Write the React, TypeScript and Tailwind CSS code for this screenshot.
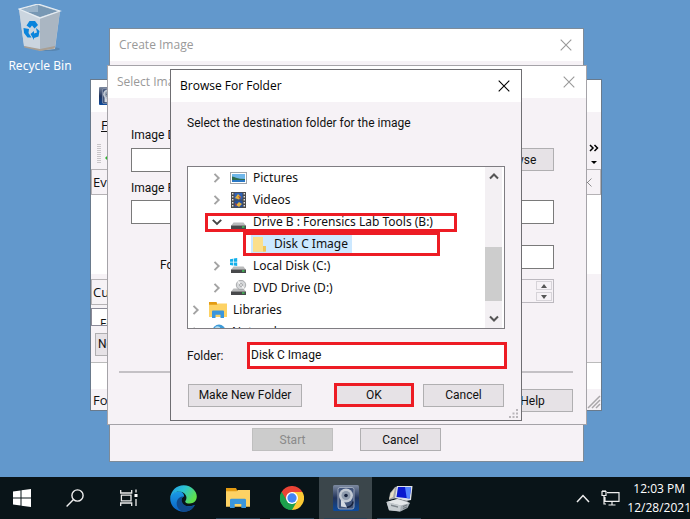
import React from 'react';

const SEGOE = "font-['Open_Sans',sans-serif]";
const SHELL = "font-['Noto_Sans',sans-serif]";
const TAHOMA = "font-['Roboto','Noto_Sans',sans-serif]";

function Cross({ className = '' }: { className?: string }) {
  return (
    <svg viewBox="0 0 12 12" className={'h-3 w-3 ' + className} fill="none" stroke="currentColor" strokeWidth="1.1">
      <path d="M.7.7l10.6 10.6M11.3.7L.7 11.3" />
    </svg>
  );
}

function TitleBar({ title, active = false }: { title: string; active?: boolean }) {
  return (
    <header className={'flex h-8 shrink-0 items-center justify-between bg-white pl-[9px] pr-[11px] ' + (active ? 'text-black' : 'text-[#999]')}>
      <h2 className={'whitespace-nowrap text-[12px] leading-4 ' + SEGOE}>{title}</h2>
      <button type="button" aria-label={'Close ' + title}>
        <Cross />
      </button>
    </header>
  );
}

function PushButton({ children, className = '', disabled = false }: { children: React.ReactNode; className?: string; disabled?: boolean }) {
  return (
    <button
      type="button"
      disabled={disabled}
      className={
        'h-[23px] shrink-0 whitespace-nowrap border text-[12px] leading-4 ' +
        (disabled ? 'border-[#bfbfbf] bg-[#ccc] text-[#8a8a8a] ' : 'border-[#b0afb1] bg-[#e6e2e6] text-[#111] ') +
        TAHOMA + ' ' + className
      }
    >
      {children}
    </button>
  );
}

function DiskImager({ className = '' }: { className?: string }) {
  return (
    <svg viewBox="0 0 26 26" className={className}>
      <defs>
        <linearGradient id="imgr" x1="0" y1="0" x2="0" y2="1">
          <stop offset="0" stopColor="#7d8aa0" />
          <stop offset=".5" stopColor="#22345c" />
          <stop offset="1" stopColor="#0c4a9c" />
        </linearGradient>
      </defs>
      <rect width="26" height="26" rx="1.5" fill="url(#imgr)" />
      <rect x="5" y="2.5" width="16" height="21.5" rx="2" fill="#41547a" stroke="#aeb8c8" strokeWidth=".8" />
      <circle cx="13" cy="10.5" r="7" fill="#c3cad4" />
      <circle cx="13" cy="10.5" r="4.5" fill="#8f9cae" />
      <circle cx="13" cy="10.5" r="1.8" fill="#17233f" />
      <path d="M8 15v6.500l6 1-3-6z" fill="#d5dae2" />
      <path d="M14 22.500c4-1 6-3 6-6" fill="none" stroke="#17233f" strokeWidth="1.500" />
    </svg>
  );
}

function RecycleBin() {
  return (
    <svg viewBox="0 0 44 48" className="h-12 w-11">
      <ellipse cx="30" cy="45" rx="12" ry="2" fill="#4d7396" opacity=".5" />
      <path d="M1 5L20 0l22 7-5 38-15 1.500L6 42z" fill="#c3cdd7" />
      <path d="M1 5l21 9v32.500L6 42z" fill="#cbd5df" />
      <path d="M22 14l20-7-5 36-15 3.500z" fill="#aab6c2" />
      <path d="M3 5.500L20 1l20 6.300L22 13z" fill="#7898b4" />
      <path d="M3 5.500L20 1v7l-12 0z" fill="#9bb4ca" />
      <path d="M1 5L20 0l22 7-20 7z" fill="none" stroke="#e6edf3" strokeWidth="1.200" />
      <path d="M6 42l16 3 15-3-.4 2.500L22 47 6.300 43.500z" fill="#a99f93" />
      <g fill="#0a84dc">
        <path d="M8.500 21.500l3-4.500h5.500l3 4-3.500 3.500-2.500-3-2 2.500z" />
        <path d="M5.500 24l5.500 1-.5 4 3 4.500h-4l-3.500-4.500z" />
        <path d="M12.500 30l3.500-3v2.500l3-1-1-4.500 3.500 3-1 5.500-4.500 1.500v2z" />
      </g>
    </svg>
  );
}

/* ---------- imager main window ---------- */

function MainWindow() {
  return (
    <section className={'absolute left-[90px] top-[79px] flex h-[332px] w-[512px] flex-col border border-[#697a8c] bg-[#f6f2f6] text-[13px] leading-4 text-[#111] ' + SEGOE}>
      <header className="flex h-8 shrink-0 items-center bg-white pl-2">
        <DiskImager className="h-[18px] w-[18px]" />
      </header>
      <nav className="flex h-[26px] shrink-0 items-center pl-[10px]">
        <button type="button"><u>F</u>ile</button>
      </nav>
      <div className="flex h-[31px] shrink-0 items-center justify-between pl-[6px] pr-[2px]">
        <div className="flex items-center gap-1">
          <span className="h-5 w-1 bg-[repeating-linear-gradient(#c8c5c8_0_1px,transparent_1px_2px)]" />
          <svg viewBox="0 0 8 8" className="mt-2 h-2 w-2"><path d="M4 0l4 4-4 4-4-4z" fill="#2fb52f" /></svg>
        </div>
        <svg viewBox="0 0 10 24" className="h-6 w-[10px]" fill="none" stroke="#000" strokeWidth="1.500">
          <path d="M1 3l3 3-3 3M5.500 3l3 3-3 3" />
          <path d="M2 19h6l-3 3z" fill="#000" stroke="none" />
        </svg>
      </div>
      <div className="flex h-[26px] shrink-0 items-center justify-between border border-[#b5b2b5] pl-[1px] pr-2">
        <span>Evidence Tree</span>
        <button type="button" aria-label="Close Evidence Tree"><Cross className="h-[9px] w-[9px] text-[#777]" /></button>
      </div>
      <div className="h-[79px] shrink-0 bg-white" />
      <div className="mr-4 mt-[5px] flex h-[26px] shrink-0 items-center border border-[#b5b2b5] pl-[1px]">Custom</div>
      <div className="mr-4 mt-[3px] h-[18px] shrink-0 overflow-hidden border border-[#8b8a98] bg-white pl-2 pt-[7px] text-[12px]">File</div>
      <div className="flex h-[37px] shrink-0 items-center border-b border-[#bbb] pl-1">
        <PushButton className="w-[60px] pl-[2px] text-left">New</PushButton>
      </div>
      <div className="flex-1 bg-white" />
      <footer className="flex h-[21px] shrink-0 items-center justify-between pl-[2px]">
        <span>For</span>
        <svg viewBox="0 0 14 14" className="mt-1 h-[14px] w-[14px]" stroke="#aaa7aa" strokeWidth="1.500">
          <path d="M1 13L13 1M5 13l8-8M9 13l4-4" />
        </svg>
      </footer>
    </section>
  );
}

/* ---------- create image window ---------- */

function CreateImageWindow() {
  return (
    <section className="absolute left-[109px] top-[28px] flex h-[434px] w-[475px] flex-col border border-[#7d8b99] bg-[#f6f2f6]">
      <TitleBar title="Create Image" />
      <div className="flex-1" />
      <div className="mb-[10px] flex gap-[27px] pl-[142px]">
        <PushButton disabled className="w-[81px]">Start</PushButton>
        <PushButton className="w-[81px]">Cancel</PushButton>
      </div>
    </section>
  );
}

/* ---------- select image destination window ---------- */

const FIELD = 'block h-6 border border-[#7a7a7a] bg-white px-1 outline-none ';

function SelectImageWindow() {
  return (
    <section className={'absolute left-[107px] top-[65px] flex h-[360px] w-[480px] flex-col border border-[#a5a3a8] bg-[#f6f2f6] text-[12px] leading-4 text-[#111] ' + TAHOMA}>
      <TitleBar title="Select Image Destination" />
      <div className="flex flex-1 flex-col pl-[23px] pr-8 pt-[29px]">
        <label htmlFor="dest">Image Destination Folder</label>
        <div className="mt-[5px] flex gap-2">
          <input id="dest" className={FIELD + 'min-w-0 flex-1'} />
          <PushButton className="w-[75px]">Browse</PushButton>
        </div>
        <label htmlFor="fname" className="mt-2">Image Filename</label>
        <input id="fname" className={FIELD + 'mt-1 w-full'} />
        <input id="fragment" aria-label="Fragment size" className={FIELD + 'mt-[21px] w-20 self-end'} />
        <div className="mt-[-12px] flex items-start justify-between pl-[29px]">
          <label htmlFor="level">For</label>
          <div className="mt-[22px] flex h-6 w-20 border border-[#bcb9bf]">
            <input id="level" className="min-w-0 flex-1 outline-none" />
            <span className="flex w-[18px] flex-col gap-[2px] p-px">
              <button type="button" aria-label="Increase" className="flex flex-1 items-center justify-center border border-[#d6d3d8]">
                <svg viewBox="0 0 6 4" className="h-1 w-[6px]"><path d="M0 4l3-4 3 4z" fill="#555" /></svg>
              </button>
              <button type="button" aria-label="Decrease" className="flex flex-1 items-center justify-center border border-[#d6d3d8]">
                <svg viewBox="0 0 6 4" className="h-1 w-[6px]"><path d="M0 0l3 4 3-4z" fill="#555" /></svg>
              </button>
            </span>
          </div>
        </div>
      </div>
      <footer className="flex flex-col gap-4 pb-3 pl-[11px] pr-[13px]">
        <hr className="border-t-2 border-[#c4c1c5]" />
        <PushButton className="w-[81px] self-end">Help</PushButton>
      </footer>
    </section>
  );
}

/* ---------- tree icons ---------- */

function PictureIcon() {
  return (
    <svg viewBox="0 0 17 16" className="h-4 w-[17px]">
      <rect x=".5" y="2.500" width="16" height="11" fill="#fff" stroke="#a0a5aa" />
      <rect x="2" y="4" width="13" height="8" fill="#6fb7ea" />
      <path d="M2 6.500c3 .3 5 2 8 2.200l5 .3v1H2z" fill="#2e6b4c" />
      <path d="M2 10h13v2H2z" fill="#2a78c4" />
    </svg>
  );
}
function VideoIcon() {
  return (
    <svg viewBox="0 0 17 16" className="h-4 w-[17px]">
      <rect x="1" width="15" height="16" fill="#4b4b4b" />
      <path d="M2.700 1v15M14.300 1v15" stroke="#e2e2e2" strokeWidth="1.400" strokeDasharray="1.500 1.500" />
      <rect x="4.500" y=".8" width="8" height="6.700" fill="#2f62b8" />
      <rect x="4.500" y="8.500" width="8" height="6.700" fill="#234f9f" />
      <path d="M5 6l3-4 3 3-2 2.500zM6 13l3-3 3 2-3 3z" fill="#e3b23c" />
      <path d="M8 4l3 1-1 2zM5 11l2 1-1 3z" fill="#b8452f" />
    </svg>
  );
}
function DriveBody() {
  return (
    <>
      <path d="M3.500 8.500h10l2.500 3.300H1z" fill="#b9babb" />
      <path d="M1 11.500h15V15H1z" fill="#48494b" />
      <path d="M12 13h2.500" stroke="#3fe05a" strokeWidth="1.200" />
    </>
  );
}
function DriveIcon() {
  return <svg viewBox="0 0 17 16" className="h-4 w-[17px]"><DriveBody /></svg>;
}
function SystemDriveIcon() {
  return (
    <svg viewBox="0 0 17 16" className="h-4 w-[17px]">
      <DriveBody />
      <path d="M0 1.200l3-.5v3H0zM3.700.6L7.200 0v3.700H3.700zM0 4.400h3v3l-3-.5zM3.700 4.400h3.500V8l-3.500-.5z" fill="#14b0ea" />
    </svg>
  );
}
function DvdIcon() {
  return (
    <svg viewBox="0 0 17 16" className="h-4 w-[17px]">
      <DriveBody />
      <circle cx="11" cy="5" r="4.700" fill="#d6d8da" stroke="#9a9da0" strokeWidth=".8" />
      <path d="M11 5L8 1.500M11 5l3 3.500" stroke="#f5f5f5" strokeWidth="1.500" />
      <circle cx="11" cy="5" r="1.400" fill="#fff" stroke="#8b8e91" strokeWidth=".8" />
    </svg>
  );
}
function FolderIcon() {
  return (
    <svg viewBox="0 0 17 16" className="h-4 w-[17px]">
      <path d="M2 1h9v13l4 1.500H2z" fill="#f4d06a" />
      <path d="M2 1h10v9h3v5.500H2z" fill="#fbdf8b" />
      <path d="M12 10h3v5.500h-3z" fill="#eec65a" />
    </svg>
  );
}
function LibraryIcon({ className = 'h-4 w-[18px]' }: { className?: string }) {
  return (
    <svg viewBox="0 0 18 15" className={className} preserveAspectRatio="none">
      <path d="M0 0h7.500l1 2H18v4H0z" fill="#e39b12" />
      <path d="M0 2.500h8l1-1h9V14H0z" fill="#fdd264" />
      <path d="M3 15V9q0-1 1-1h10q1 0 1 1v6h-3.500v-3h-5v3z" fill="#3a96dc" />
    </svg>
  );
}
function NetworkIcon() {
  return (
    <svg viewBox="0 0 17 16" className="h-4 w-[17px]">
      <circle cx="10" cy="7" r="6.500" fill="#3c9ad8" />
      <path d="M6 3c3-2 6 0 5 2s-4 1-5-2z" fill="#b7dff2" />
      <path d="M1 8h9v6H1z" fill="#2d78b5" />
    </svg>
  );
}

function Expander({ open = false }: { open?: boolean }) {
  return (
    <svg viewBox="0 0 10 10" className="h-[10px] w-[10px]" fill="none" stroke={open ? '#444' : '#a3a3a3'} strokeWidth="1.900">
      {open ? <path d="M.8 2.800L5 7l4.200-4.200" /> : <path d="M2.500 .8L6.700 5 2.500 9.200" />}
    </svg>
  );
}

type Row = { label: string; icon: React.ReactNode; indent: string; open?: boolean; leaf?: boolean; mark?: string };

const rows: Row[] = [
  { label: 'Pictures', icon: <PictureIcon />, indent: 'pl-6' },
  { label: 'Videos', icon: <VideoIcon />, indent: 'pl-6' },
  { label: 'Drive B : Forensics Lab Tools (B:)', icon: <DriveIcon />, indent: 'pl-6', open: true, mark: 'left-[17px] top-[2px] h-[19px] w-[252px]' },
  { label: 'Disk C Image', icon: <FolderIcon />, indent: 'pl-[45px]', leaf: true, mark: 'left-[55px] -top-px h-6 w-[197px]' },
  { label: 'Local Disk (C:)', icon: <SystemDriveIcon />, indent: 'pl-6' },
  { label: 'DVD Drive (D:)', icon: <DvdIcon />, indent: 'pl-6' },
  { label: 'Libraries', icon: <LibraryIcon />, indent: 'pl-[3px]' },
  { label: 'Network', icon: <NetworkIcon />, indent: 'pl-[3px]' },
];

function FolderTree() {
  return (
    <div className="ml-4 mr-[16px] flex h-[163px] border border-[#7f7d82] bg-white">
      <ul role="tree" aria-label="Folders" className={'min-w-0 flex-1 overflow-hidden text-[12px] leading-4 text-[#111] ' + SHELL}>
        {rows.map((r) => (
          <li key={r.label} role="treeitem" aria-selected={!!r.leaf} className={'relative flex h-[22px] items-center whitespace-nowrap ' + r.indent}>
            <span className="flex w-[18px] items-center">{!r.leaf && <Expander open={r.open} />}</span>
            <span className={'flex h-full items-center gap-[6px] pr-1 ' + (r.leaf ? 'bg-[#cce8ff]' : '')}>
              {r.icon}
              {r.label}
            </span>
            {r.mark && <span className={'absolute z-10 border-[3px] border-[#ed1c24] ' + r.mark} />}
          </li>
        ))}
      </ul>
      <div className="mr-[2px] flex w-[17px] shrink-0 flex-col items-center bg-[#f3f0f3]">
        <button type="button" aria-label="Scroll up" className="flex h-[18px] items-center">
          <svg viewBox="0 0 10 8" className="h-2 w-[10px]" fill="none" stroke="#555" strokeWidth="2"><path d="M1 6.500l4-4 4 4" /></svg>
        </button>
        <div className="flex-1" />
        <div className="h-[54px] w-full bg-[#cdcdcd]" />
        <div className="h-[9px]" />
        <button type="button" aria-label="Scroll down" className="flex h-[18px] items-center">
          <svg viewBox="0 0 10 8" className="h-2 w-[10px]" fill="none" stroke="#555" strokeWidth="2"><path d="M1 1.500l4 4 4-4" /></svg>
        </button>
      </div>
    </div>
  );
}

function BrowseDialog() {
  return (
    <section role="dialog" aria-label="Browse For Folder" className={'absolute left-[170px] top-[69px] flex h-[352px] w-[352px] flex-col border border-[#6f6e72] bg-[#f6f2f6] text-[12px] leading-4 text-[#111] ' + TAHOMA}>
      <TitleBar title="Browse For Folder" active />
      <p className="mb-[35px] ml-4 mt-[13px] whitespace-nowrap">Select the destination folder for the image</p>
      <FolderTree />
      <div className="mt-[13px] flex items-center pl-4 pr-[14px]">
        <label htmlFor="folder" className="w-[60px]">Folder:</label>
        <input id="folder" defaultValue="Disk C Image" className="h-[27px] min-w-0 flex-1 border-[3px] border-[#ed1c24] bg-white px-px pb-[2px] outline-none" />
      </div>
      <div className="mt-[14px] flex items-center pl-[17px] pr-[17px]">
        <PushButton className="w-[114px]">Make New Folder</PushButton>
        <button type="button" className="ml-8 h-6 w-[80px] border-[3px] border-[#ed1c24] bg-[#e6e2e6]">OK</button>
        <PushButton className="ml-auto w-[81px]">Cancel</PushButton>
      </div>
      <svg viewBox="0 0 9 9" className="mb-[2px] mr-[3px] mt-auto h-[9px] w-[9px] shrink-0 self-end" fill="#b9b6ba">
        <path d="M7 0h2v2H7zM7 3.500h2v2H7zM7 7h2v2H7zM3.500 3.500h2v2h-2zM3.500 7h2v2h-2zM0 7h2v2H0z" />
      </svg>
    </section>
  );
}

/* ---------- taskbar ---------- */

function WindowsLogo() {
  return (
    <svg viewBox="0 0 18 18" className="h-[18px] w-[18px]" fill="#fff">
      <path d="M0 2.500l7.500-1v7H0zM8.500 1.300L18 0v8.500H8.500zM0 9.500h7.500v7l-7.500-1zM8.500 9.500H18V18l-9.500-1.300z" />
    </svg>
  );
}
function SearchGlyph() {
  return (
    <svg viewBox="0 0 18 18" className="h-[18px] w-[18px]" fill="none" stroke="#f0f0f0" strokeWidth="1.400">
      <circle cx="11.500" cy="6.500" r="5.600" />
      <path d="M7.500 10.500L.6 17.400" />
    </svg>
  );
}
function TaskViewGlyph() {
  return (
    <svg viewBox="0 0 18 18" className="h-[18px] w-[18px]" fill="none" stroke="#ececec" strokeWidth="1.300">
      <path d="M.7 1v3h11V1M.7 17v-3h11v3M1.400 6.200h9.600v5.600H1.400zM16 .5v3M16 10v7" />
      <path d="M14.500 5h3v3h-3z" fill="#fff" stroke="none" />
    </svg>
  );
}
function EdgeLogo() {
  return (
    <svg viewBox="0 0 256 256" className="h-[27px] w-[27px]">
      <defs>
        <linearGradient id="eg1" x1="0" y1="0" x2="1" y2=".5">
          <stop offset="0" stopColor="#2196e8" />
          <stop offset=".5" stopColor="#2bc3d2" />
          <stop offset="1" stopColor="#5fe04b" />
        </linearGradient>
        <linearGradient id="eg2" x1="0" y1="0" x2="0" y2="1">
          <stop offset="0" stopColor="#1a9be6" />
          <stop offset="1" stopColor="#0b62c4" />
        </linearGradient>
      </defs>
      <path d="M235 190c-20 42-62 64-105 64C60 254 2 198 2 128c0-38 38-68 80-68 22 0 52 14 52 50-10 0-28 16-28 42 0 44 58 66 129 38z" fill="url(#eg2)" />
      <path d="M235 190c-16 10-42 18-68 12-34-8-56-34-56-60 0-14 8-26 14-32-30 0-62 24-62 66 0 46 40 82 88 76 36-4 70-28 84-62z" fill="#114a8b" />
      <path d="M2 124C8 52 62 2 130 2c74 0 124 56 124 108 0 42-32 66-66 66-30 0-44-10-44-20 0-8 12-12 12-36 0-28-28-58-70-58-36 0-72 22-84 62z" fill="url(#eg1)" />
    </svg>
  );
}
function ChromeLogo() {
  return (
    <svg viewBox="0 0 48 48" className="h-6 w-6">
      <path d="M24 24L3.200 12A24 24 0 0 1 44.800 12z" fill="#ea4335" />
      <path d="M24 24L3.200 12A24 24 0 0 0 24 48z" fill="#1da04c" />
      <path d="M24 24h-2l2 24A24 24 0 0 0 44.800 12H24z" fill="#fcc934" />
      <path d="M24 12H3.200l10.400 18L24 24z" fill="#ea4335" />
      <path d="M3.200 12L13.600 30 24 36l10.400-6L24 48A24 24 0 0 1 3.200 12z" fill="#1da04c" />
      <circle cx="24" cy="24" r="12" fill="#fff" />
      <circle cx="24" cy="24" r="9.300" fill="#4285f4" />
    </svg>
  );
}
function ServerIcon() {
  return (
    <svg viewBox="0 0 27 27" className="h-[27px] w-[27px]">
      <path d="M4 8l5-6 4-1-2 12-8 2z" fill="#a3a5a9" />
      <path d="M5 8l4-5-2 9-4 2z" fill="#e9e0c6" />
      <path d="M11 1L26.500 1l-1.500 14-5 1-11-3z" fill="#dfe2e8" />
      <path d="M12 2h13l-1.300 11.500-13.200-1.500z" fill="#0a18cf" />
      <path d="M19 2h6l-1.300 11.500-3-.4z" fill="#5484ff" />
      <path d="M13 14l9 2-2 2.500-8-2z" fill="#8c9197" />
      <path d="M.5 17l11-3 12.500 4-2.500 5-7 3.500L3 25.500z" fill="#a4abb1" />
      <path d="M.5 17l11-3 12.500 4-9 2.500z" fill="#e4e7e9" />
      <path d="M.5 17l14.500 3.500-1 6L3 25z" fill="#c6ccd0" />
      <path d="M5 19.500l7 1.700v1.500l-7-1.700z" fill="#7d858b" />
      <path d="M17 21.500l4-1.500M17 23.500l4-1.500" stroke="#6f777d" />
    </svg>
  );
}

const apps = [
  { name: 'Start', icon: <WindowsLogo />, box: 'w-12 pr-1' },
  { name: 'Search', icon: <SearchGlyph />, box: 'w-[54px]' },
  { name: 'Task View', icon: <TaskViewGlyph />, box: 'w-[54px]' },
  { name: 'Microsoft Edge', icon: <EdgeLogo />, box: 'w-[55px]' },
  { name: 'File Explorer', icon: <LibraryIcon className="h-5 w-6" />, box: 'w-[54px]', running: true },
  { name: 'Google Chrome', icon: <ChromeLogo />, box: 'w-[54px]', running: true },
  { name: 'Disk imager', icon: <DiskImager className="h-[26px] w-[26px]" />, box: 'w-[53px] bg-[#3b464b]', running: true },
  { name: 'Server tools', icon: <ServerIcon />, box: 'w-[54px]', running: true },
];

function Taskbar() {
  return (
    <footer className="flex h-[42px] shrink-0 overflow-hidden bg-[#091418]">
      {apps.map((a) => (
        <button key={a.name} type="button" aria-label={a.name} className={'relative flex shrink-0 items-center justify-center ' + a.box}>
          {a.icon}
          {a.running && <span className="absolute inset-x-[5px] bottom-0 h-px bg-[#2a4356]" />}
        </button>
      ))}
      <div className={'ml-auto flex shrink-0 items-center text-[12px] text-white ' + SEGOE}>
        <button type="button" aria-label="Show hidden icons" className="mr-[11px]">
          <svg viewBox="0 0 14 9" className="h-[9px] w-[14px]" fill="none" stroke="#eee" strokeWidth="1.500"><path d="M1 8l6-6.500L13 8" /></svg>
        </button>
        <svg viewBox="0 0 19 16" className="mr-[7px] h-4 w-[19px]" fill="none" stroke="#eee" strokeWidth="1.200">
          <path d="M6 2.600h12v8.800H4V7M11 11.500V15M7.500 15h7M1 1.500h4v4H1zM3 5.500V14h2M2 0v2M4 0v2" />
        </svg>
        <time className="-mr-px flex flex-col items-center whitespace-nowrap leading-[19px]">
          <span>12:03 PM</span>
          <span>12/28/2021</span>
        </time>
      </div>
    </footer>
  );
}

export default function App() {
  return (
    <div className="flex h-screen flex-col overflow-hidden bg-[#6298cc]">
      <main className="relative min-h-0 flex-1">
        <button type="button" className={'absolute left-[5px] top-1 flex w-[70px] flex-col items-center gap-[6px] whitespace-nowrap text-[12px] leading-4 text-white ' + SHELL}>
          <RecycleBin />
          Recycle Bin
        </button>
        <MainWindow />
        <CreateImageWindow />
        <SelectImageWindow />
        <BrowseDialog />
      </main>
      <Taskbar />
    </div>
  );
}
